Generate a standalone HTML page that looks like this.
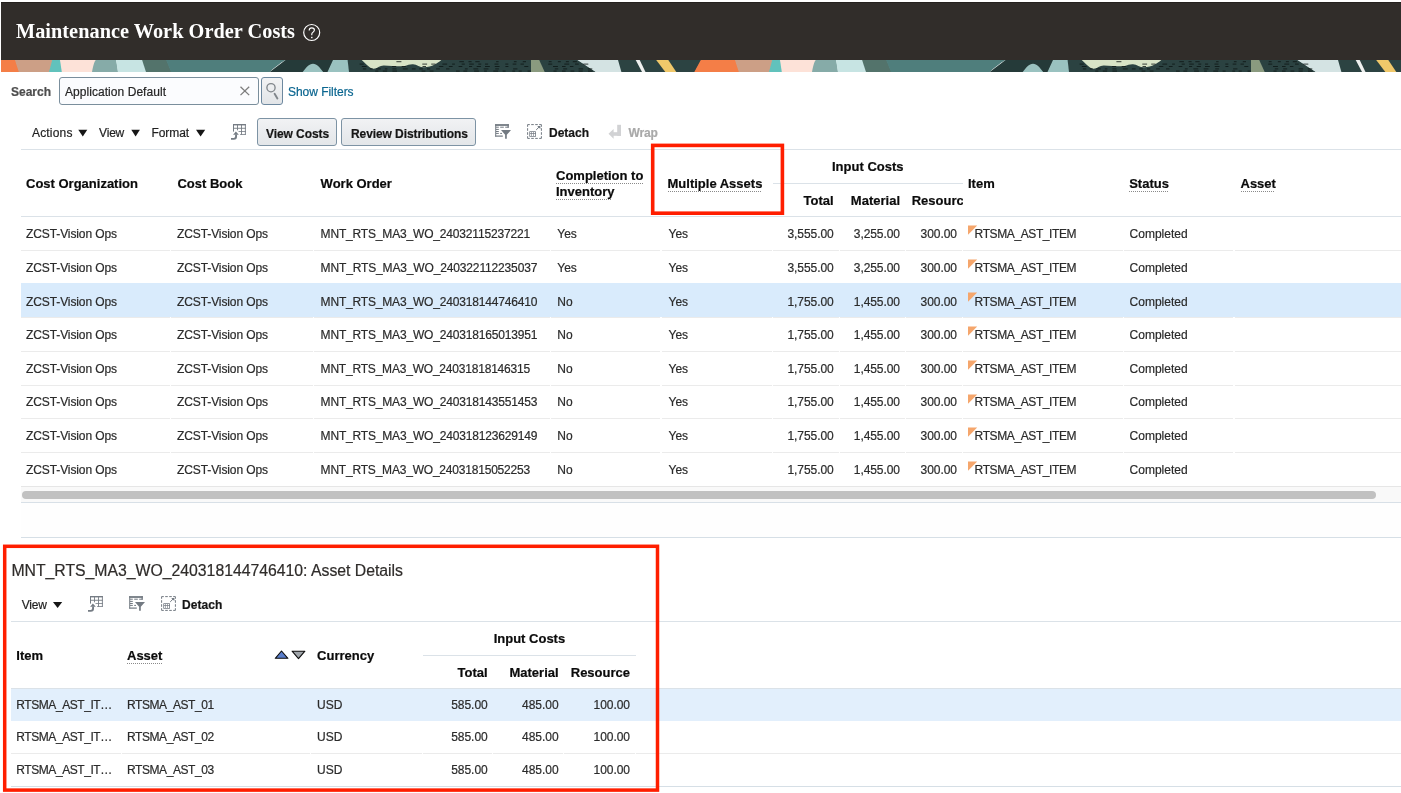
<!DOCTYPE html>
<html><head><meta charset="utf-8"><title>Maintenance Work Order Costs</title>
<style>
html,body{margin:0;padding:0;background:#fff;width:1401px;height:793px;overflow:hidden;position:relative}
span{position:absolute;white-space:nowrap;line-height:1;-webkit-text-stroke-width:0.2px}
#root{position:absolute;left:0;top:0;width:1401px;height:793px;will-change:transform;background:#fff}
</style></head><body><div id="root">
<div style="position:absolute;left:1px;top:2px;width:1400px;height:58px;background:#312d2a"></div>
<div style="position:absolute;left:1px;top:2px;width:1400px;height:1px;background:#25211e"></div>
<span style="left:16.00px;top:21.00px;font-size:20.3px;font-family:'Liberation Serif', serif;font-weight:bold;color:#ffffff;letter-spacing:0.033px;-webkit-text-stroke-width:0;">Maintenance Work Order Costs</span>
<svg style="position:absolute;left:300px;top:21px" width="24" height="24" viewBox="0 0 24 24">
<circle cx="11.7" cy="11.5" r="8" fill="none" stroke="#fff" stroke-width="1.2"/>
<path d="M9.2 9.4 C9.2 7.6 10.4 6.8 11.8 6.8 C13.3 6.8 14.4 7.7 14.4 9.1 C14.4 10.8 12.1 11.2 11.8 12.9 L11.8 14.2" fill="none" stroke="#fff" stroke-width="1.15"/>
<rect x="11.1" y="15.8" width="1.4" height="1.4" fill="#fff"/>
</svg>
<svg style="position:absolute;left:0;top:60px" width="1401" height="12" viewBox="0 0 1401 12"><defs><clipPath id="bc"><rect x="1" y="0" width="1400" height="12"/></clipPath></defs><g clip-path="url(#bc)"><polygon points="-19.2,0.0 15.7,0.0 19.5,12.0 -25.7,12.0" fill="#f47e47"/><polygon points="15.0,0.0 52.9,0.0 49.7,12.0 18.8,12.0" fill="#cc9f86"/><polygon points="52.2,0.0 60.7,0.0 62.5,12.0 49.0,12.0" fill="#61c2bc"/><polygon points="60.0,0.0 96.6,0.0 92.7,12.0 61.8,12.0" fill="#fde2d8"/><path d="M92.0 12 C93.5 4 95.0 0 96.0 0 L116.0 0 C117.0 3 117.5 8 118.0 12 Z" fill="#86aba8"/><polygon points="116.0,0.0 142.8,0.0 146.7,12.0 118.0,12.0" fill="#c7e4e3"/><polygon points="142.1,0.0 166.8,0.0 171.7,12.0 146.0,12.0" fill="#53736b"/><path d="M166.1 0 L285.5 0 C280.0 3 274.0 8 269.7 12 L171.0 12 Z" fill="#4f7e7c"/><polygon points="285.5,0.0 333.7,0.0 328.2,12.0 269.7,12.0" fill="#253a39"/><path d="M302.7 12 C306.0 8 309.0 3.8 313.0 3.8 C317.0 3.8 320.0 8 323.2 12 Z" fill="#9ac2c0"/><polygon points="333.0,0.0 348.3,0.0 349.7,12.0 327.5,12.0" fill="#9ac2c0"/><polygon points="347.6,0.0 578.1,0.0 596.4,12.0 349.0,12.0" fill="#2b4241"/><path d="M361.7 0 C366.0 4 370.0 8.7 373.7 8.7 C377.0 8.7 380.0 5.3 384.0 5.5 C390.0 5.8 398.0 6.5 404.0 6.2 C408.0 5 410.0 4 413.0 4.2 C417.0 4.5 420.0 7.4 424.0 7.3 C432.0 7 438.0 3 441.3 0 Z" fill="#d8e4c7"/><polygon points="531.0,0.0 539.2,0.0 544.7,12.0 531.0,12.0" fill="#8a9a7f"/><polygon points="577.4,0.0 618.7,0.0 622.1,12.0 595.7,12.0" fill="#d4e3e3"/><polygon points="618.0,0.0 701.5,0.0 695.0,12.0 621.4,12.0" fill="#2c4342"/><polygon points="635.7,0.0 639.7,0.0 645.5,12.0 642.0,12.0" fill="#eef0ef"/><polygon points="656.2,0.0 668.3,0.0 676.3,12.0 665.3,12.0" fill="#f0c86a"/><rect x="396.4" y="1.2" width="5.0" height="1" fill="#0c1514" opacity="0.8"/><rect x="459.3" y="1.2" width="4.6" height="1" fill="#0c1514" opacity="0.8"/><rect x="468.5" y="1.2" width="3.1" height="1" fill="#0c1514" opacity="0.8"/><rect x="475.3" y="1.2" width="4.4" height="1" fill="#0c1514" opacity="0.8"/><rect x="496.1" y="1.2" width="2.5" height="1" fill="#0c1514" opacity="0.8"/><rect x="513.9" y="1.2" width="2.7" height="1" fill="#0c1514" opacity="0.8"/><rect x="522.8" y="1.2" width="3.2" height="1" fill="#0c1514" opacity="0.8"/><rect x="548.8" y="1.2" width="2.8" height="1" fill="#0c1514" opacity="0.8"/><rect x="557.9" y="1.2" width="2.9" height="1" fill="#0c1514" opacity="0.8"/><rect x="565.9" y="1.2" width="3.0" height="1" fill="#0c1514" opacity="0.8"/><rect x="572.8" y="1.2" width="4.1" height="1" fill="#0c1514" opacity="0.8"/><rect x="359.6" y="3.6" width="4.1" height="1" fill="#0c1514" opacity="0.8"/><rect x="422.3" y="3.6" width="4.8" height="1" fill="#0c1514" opacity="0.8"/><rect x="431.2" y="3.6" width="4.3" height="1" fill="#0c1514" opacity="0.8"/><rect x="442.4" y="3.6" width="4.7" height="1" fill="#0c1514" opacity="0.8"/><rect x="452.1" y="3.6" width="2.8" height="1" fill="#0c1514" opacity="0.8"/><rect x="461.7" y="3.6" width="3.1" height="1" fill="#0c1514" opacity="0.8"/><rect x="469.2" y="3.6" width="4.6" height="1" fill="#0c1514" opacity="0.8"/><rect x="478.3" y="3.6" width="2.9" height="1" fill="#0c1514" opacity="0.8"/><rect x="485.0" y="3.6" width="3.1" height="1" fill="#0c1514" opacity="0.8"/><rect x="494.5" y="3.6" width="4.0" height="1" fill="#0c1514" opacity="0.8"/><rect x="505.3" y="3.6" width="3.0" height="1" fill="#0c1514" opacity="0.8"/><rect x="512.7" y="3.6" width="3.6" height="1" fill="#0c1514" opacity="0.8"/><rect x="520.5" y="3.6" width="3.4" height="1" fill="#0c1514" opacity="0.8"/><rect x="548.2" y="3.6" width="4.0" height="1" fill="#0c1514" opacity="0.8"/><rect x="564.3" y="3.6" width="4.9" height="1" fill="#0c1514" opacity="0.8"/><rect x="575.0" y="3.6" width="3.7" height="1" fill="#0c1514" opacity="0.8"/><rect x="583.3" y="3.6" width="5.0" height="1" fill="#0c1514" opacity="0.8"/><rect x="361.8" y="6.0" width="4.8" height="1" fill="#0c1514" opacity="0.8"/><rect x="392.1" y="6.0" width="4.1" height="1" fill="#0c1514" opacity="0.8"/><rect x="401.7" y="6.0" width="4.0" height="1" fill="#0c1514" opacity="0.8"/><rect x="422.5" y="6.0" width="3.5" height="1" fill="#0c1514" opacity="0.8"/><rect x="438.9" y="6.0" width="4.4" height="1" fill="#0c1514" opacity="0.8"/><rect x="448.9" y="6.0" width="3.7" height="1" fill="#0c1514" opacity="0.8"/><rect x="458.6" y="6.0" width="3.7" height="1" fill="#0c1514" opacity="0.8"/><rect x="469.0" y="6.0" width="3.1" height="1" fill="#0c1514" opacity="0.8"/><rect x="476.7" y="6.0" width="4.2" height="1" fill="#0c1514" opacity="0.8"/><rect x="485.0" y="6.0" width="4.8" height="1" fill="#0c1514" opacity="0.8"/><rect x="494.8" y="6.0" width="4.7" height="1" fill="#0c1514" opacity="0.8"/><rect x="505.4" y="6.0" width="3.0" height="1" fill="#0c1514" opacity="0.8"/><rect x="524.3" y="6.0" width="4.0" height="1" fill="#0c1514" opacity="0.8"/><rect x="553.0" y="6.0" width="4.9" height="1" fill="#0c1514" opacity="0.8"/><rect x="562.0" y="6.0" width="3.6" height="1" fill="#0c1514" opacity="0.8"/><rect x="569.9" y="6.0" width="3.5" height="1" fill="#0c1514" opacity="0.8"/><rect x="362.9" y="8.4" width="3.3" height="1" fill="#0c1514" opacity="0.8"/><rect x="369.8" y="8.4" width="2.8" height="1" fill="#0c1514" opacity="0.8"/><rect x="376.2" y="8.4" width="4.6" height="1" fill="#0c1514" opacity="0.8"/><rect x="384.8" y="8.4" width="2.6" height="1" fill="#0c1514" opacity="0.8"/><rect x="392.4" y="8.4" width="4.1" height="1" fill="#0c1514" opacity="0.8"/><rect x="402.8" y="8.4" width="4.9" height="1" fill="#0c1514" opacity="0.8"/><rect x="411.9" y="8.4" width="3.7" height="1" fill="#0c1514" opacity="0.8"/><rect x="419.2" y="8.4" width="3.7" height="1" fill="#0c1514" opacity="0.8"/><rect x="427.0" y="8.4" width="3.2" height="1" fill="#0c1514" opacity="0.8"/><rect x="436.1" y="8.4" width="3.8" height="1" fill="#0c1514" opacity="0.8"/><rect x="446.0" y="8.4" width="3.5" height="1" fill="#0c1514" opacity="0.8"/><rect x="464.9" y="8.4" width="2.8" height="1" fill="#0c1514" opacity="0.8"/><rect x="473.4" y="8.4" width="4.8" height="1" fill="#0c1514" opacity="0.8"/><rect x="483.7" y="8.4" width="4.7" height="1" fill="#0c1514" opacity="0.8"/><rect x="495.2" y="8.4" width="3.7" height="1" fill="#0c1514" opacity="0.8"/><rect x="513.1" y="8.4" width="4.3" height="1" fill="#0c1514" opacity="0.8"/><rect x="554.8" y="8.4" width="3.4" height="1" fill="#0c1514" opacity="0.8"/><rect x="563.2" y="8.4" width="3.9" height="1" fill="#0c1514" opacity="0.8"/><rect x="578.6" y="8.4" width="4.5" height="1" fill="#0c1514" opacity="0.8"/><rect x="587.8" y="8.4" width="4.5" height="1" fill="#0c1514" opacity="0.8"/><rect x="375.2" y="10.6" width="3.1" height="1" fill="#0c1514" opacity="0.8"/><rect x="382.8" y="10.6" width="4.3" height="1" fill="#0c1514" opacity="0.8"/><rect x="392.4" y="10.6" width="4.6" height="1" fill="#0c1514" opacity="0.8"/><rect x="421.6" y="10.6" width="3.8" height="1" fill="#0c1514" opacity="0.8"/><rect x="429.7" y="10.6" width="3.8" height="1" fill="#0c1514" opacity="0.8"/><rect x="456.0" y="10.6" width="3.7" height="1" fill="#0c1514" opacity="0.8"/><rect x="463.4" y="10.6" width="3.8" height="1" fill="#0c1514" opacity="0.8"/><rect x="474.1" y="10.6" width="4.8" height="1" fill="#0c1514" opacity="0.8"/><rect x="484.1" y="10.6" width="2.8" height="1" fill="#0c1514" opacity="0.8"/><rect x="493.3" y="10.6" width="4.8" height="1" fill="#0c1514" opacity="0.8"/><rect x="502.6" y="10.6" width="3.0" height="1" fill="#0c1514" opacity="0.8"/><rect x="512.3" y="10.6" width="2.8" height="1" fill="#0c1514" opacity="0.8"/><rect x="518.7" y="10.6" width="3.0" height="1" fill="#0c1514" opacity="0.8"/><rect x="527.6" y="10.6" width="3.3" height="1" fill="#0c1514" opacity="0.8"/><rect x="553.5" y="10.6" width="3.1" height="1" fill="#0c1514" opacity="0.8"/><rect x="562.0" y="10.6" width="3.6" height="1" fill="#0c1514" opacity="0.8"/><rect x="570.5" y="10.6" width="3.8" height="1" fill="#0c1514" opacity="0.8"/><rect x="578.6" y="10.6" width="4.1" height="1" fill="#0c1514" opacity="0.8"/><rect x="588.0" y="10.6" width="4.6" height="1" fill="#0c1514" opacity="0.8"/><polygon points="700.8,0.0 735.7,0.0 739.5,12.0 694.3,12.0" fill="#f47e47"/><polygon points="735.0,0.0 772.9,0.0 769.7,12.0 738.8,12.0" fill="#cc9f86"/><polygon points="772.2,0.0 780.7,0.0 782.5,12.0 769.0,12.0" fill="#61c2bc"/><polygon points="780.0,0.0 816.6,0.0 812.7,12.0 781.8,12.0" fill="#fde2d8"/><path d="M812.0 12 C813.5 4 815.0 0 816.0 0 L836.0 0 C837.0 3 837.5 8 838.0 12 Z" fill="#86aba8"/><polygon points="836.0,0.0 862.8,0.0 866.7,12.0 838.0,12.0" fill="#c7e4e3"/><polygon points="862.1,0.0 886.8,0.0 891.7,12.0 866.0,12.0" fill="#53736b"/><path d="M886.1 0 L1005.5 0 C1000.0 3 994.0 8 989.7 12 L891.0 12 Z" fill="#4f7e7c"/><polygon points="1005.5,0.0 1053.7,0.0 1048.2,12.0 989.7,12.0" fill="#253a39"/><path d="M1022.7 12 C1026.0 8 1029.0 3.8 1033.0 3.8 C1037.0 3.8 1040.0 8 1043.2 12 Z" fill="#9ac2c0"/><polygon points="1053.0,0.0 1068.3,0.0 1069.7,12.0 1047.5,12.0" fill="#9ac2c0"/><polygon points="1067.6,0.0 1298.1,0.0 1316.4,12.0 1069.0,12.0" fill="#2b4241"/><path d="M1081.7 0 C1086.0 4 1090.0 8.7 1093.7 8.7 C1097.0 8.7 1100.0 5.3 1104.0 5.5 C1110.0 5.8 1118.0 6.5 1124.0 6.2 C1128.0 5 1130.0 4 1133.0 4.2 C1137.0 4.5 1140.0 7.4 1144.0 7.3 C1152.0 7 1158.0 3 1161.3 0 Z" fill="#d8e4c7"/><polygon points="1251.0,0.0 1259.2,0.0 1264.7,12.0 1251.0,12.0" fill="#8a9a7f"/><polygon points="1297.4,0.0 1338.7,0.0 1342.1,12.0 1315.7,12.0" fill="#d4e3e3"/><polygon points="1338.0,0.0 1421.5,0.0 1415.0,12.0 1341.4,12.0" fill="#2c4342"/><polygon points="1355.7,0.0 1359.7,0.0 1365.5,12.0 1362.0,12.0" fill="#eef0ef"/><polygon points="1376.2,0.0 1388.3,0.0 1396.3,12.0 1385.3,12.0" fill="#f0c86a"/><rect x="1116.4" y="1.2" width="5.0" height="1" fill="#0c1514" opacity="0.8"/><rect x="1179.3" y="1.2" width="4.6" height="1" fill="#0c1514" opacity="0.8"/><rect x="1188.5" y="1.2" width="3.1" height="1" fill="#0c1514" opacity="0.8"/><rect x="1195.3" y="1.2" width="4.4" height="1" fill="#0c1514" opacity="0.8"/><rect x="1216.1" y="1.2" width="2.5" height="1" fill="#0c1514" opacity="0.8"/><rect x="1233.9" y="1.2" width="2.7" height="1" fill="#0c1514" opacity="0.8"/><rect x="1242.8" y="1.2" width="3.2" height="1" fill="#0c1514" opacity="0.8"/><rect x="1268.8" y="1.2" width="2.8" height="1" fill="#0c1514" opacity="0.8"/><rect x="1277.9" y="1.2" width="2.9" height="1" fill="#0c1514" opacity="0.8"/><rect x="1285.9" y="1.2" width="3.0" height="1" fill="#0c1514" opacity="0.8"/><rect x="1292.8" y="1.2" width="4.1" height="1" fill="#0c1514" opacity="0.8"/><rect x="1079.6" y="3.6" width="4.1" height="1" fill="#0c1514" opacity="0.8"/><rect x="1142.3" y="3.6" width="4.8" height="1" fill="#0c1514" opacity="0.8"/><rect x="1151.2" y="3.6" width="4.3" height="1" fill="#0c1514" opacity="0.8"/><rect x="1162.4" y="3.6" width="4.7" height="1" fill="#0c1514" opacity="0.8"/><rect x="1172.1" y="3.6" width="2.8" height="1" fill="#0c1514" opacity="0.8"/><rect x="1181.7" y="3.6" width="3.1" height="1" fill="#0c1514" opacity="0.8"/><rect x="1189.2" y="3.6" width="4.6" height="1" fill="#0c1514" opacity="0.8"/><rect x="1198.3" y="3.6" width="2.9" height="1" fill="#0c1514" opacity="0.8"/><rect x="1205.0" y="3.6" width="3.1" height="1" fill="#0c1514" opacity="0.8"/><rect x="1214.5" y="3.6" width="4.0" height="1" fill="#0c1514" opacity="0.8"/><rect x="1225.3" y="3.6" width="3.0" height="1" fill="#0c1514" opacity="0.8"/><rect x="1232.7" y="3.6" width="3.6" height="1" fill="#0c1514" opacity="0.8"/><rect x="1240.5" y="3.6" width="3.4" height="1" fill="#0c1514" opacity="0.8"/><rect x="1268.2" y="3.6" width="4.0" height="1" fill="#0c1514" opacity="0.8"/><rect x="1284.3" y="3.6" width="4.9" height="1" fill="#0c1514" opacity="0.8"/><rect x="1295.0" y="3.6" width="3.7" height="1" fill="#0c1514" opacity="0.8"/><rect x="1303.3" y="3.6" width="5.0" height="1" fill="#0c1514" opacity="0.8"/><rect x="1081.8" y="6.0" width="4.8" height="1" fill="#0c1514" opacity="0.8"/><rect x="1112.1" y="6.0" width="4.1" height="1" fill="#0c1514" opacity="0.8"/><rect x="1121.7" y="6.0" width="4.0" height="1" fill="#0c1514" opacity="0.8"/><rect x="1142.5" y="6.0" width="3.5" height="1" fill="#0c1514" opacity="0.8"/><rect x="1158.9" y="6.0" width="4.4" height="1" fill="#0c1514" opacity="0.8"/><rect x="1168.9" y="6.0" width="3.7" height="1" fill="#0c1514" opacity="0.8"/><rect x="1178.6" y="6.0" width="3.7" height="1" fill="#0c1514" opacity="0.8"/><rect x="1189.0" y="6.0" width="3.1" height="1" fill="#0c1514" opacity="0.8"/><rect x="1196.7" y="6.0" width="4.2" height="1" fill="#0c1514" opacity="0.8"/><rect x="1205.0" y="6.0" width="4.8" height="1" fill="#0c1514" opacity="0.8"/><rect x="1214.8" y="6.0" width="4.7" height="1" fill="#0c1514" opacity="0.8"/><rect x="1225.4" y="6.0" width="3.0" height="1" fill="#0c1514" opacity="0.8"/><rect x="1244.3" y="6.0" width="4.0" height="1" fill="#0c1514" opacity="0.8"/><rect x="1273.0" y="6.0" width="4.9" height="1" fill="#0c1514" opacity="0.8"/><rect x="1282.0" y="6.0" width="3.6" height="1" fill="#0c1514" opacity="0.8"/><rect x="1289.9" y="6.0" width="3.5" height="1" fill="#0c1514" opacity="0.8"/><rect x="1082.9" y="8.4" width="3.3" height="1" fill="#0c1514" opacity="0.8"/><rect x="1089.8" y="8.4" width="2.8" height="1" fill="#0c1514" opacity="0.8"/><rect x="1096.2" y="8.4" width="4.6" height="1" fill="#0c1514" opacity="0.8"/><rect x="1104.8" y="8.4" width="2.6" height="1" fill="#0c1514" opacity="0.8"/><rect x="1112.4" y="8.4" width="4.1" height="1" fill="#0c1514" opacity="0.8"/><rect x="1122.8" y="8.4" width="4.9" height="1" fill="#0c1514" opacity="0.8"/><rect x="1131.9" y="8.4" width="3.7" height="1" fill="#0c1514" opacity="0.8"/><rect x="1139.2" y="8.4" width="3.7" height="1" fill="#0c1514" opacity="0.8"/><rect x="1147.0" y="8.4" width="3.2" height="1" fill="#0c1514" opacity="0.8"/><rect x="1156.1" y="8.4" width="3.8" height="1" fill="#0c1514" opacity="0.8"/><rect x="1166.0" y="8.4" width="3.5" height="1" fill="#0c1514" opacity="0.8"/><rect x="1184.9" y="8.4" width="2.8" height="1" fill="#0c1514" opacity="0.8"/><rect x="1193.4" y="8.4" width="4.8" height="1" fill="#0c1514" opacity="0.8"/><rect x="1203.7" y="8.4" width="4.7" height="1" fill="#0c1514" opacity="0.8"/><rect x="1215.2" y="8.4" width="3.7" height="1" fill="#0c1514" opacity="0.8"/><rect x="1233.1" y="8.4" width="4.3" height="1" fill="#0c1514" opacity="0.8"/><rect x="1274.8" y="8.4" width="3.4" height="1" fill="#0c1514" opacity="0.8"/><rect x="1283.2" y="8.4" width="3.9" height="1" fill="#0c1514" opacity="0.8"/><rect x="1298.6" y="8.4" width="4.5" height="1" fill="#0c1514" opacity="0.8"/><rect x="1307.8" y="8.4" width="4.5" height="1" fill="#0c1514" opacity="0.8"/><rect x="1095.2" y="10.6" width="3.1" height="1" fill="#0c1514" opacity="0.8"/><rect x="1102.8" y="10.6" width="4.3" height="1" fill="#0c1514" opacity="0.8"/><rect x="1112.4" y="10.6" width="4.6" height="1" fill="#0c1514" opacity="0.8"/><rect x="1141.6" y="10.6" width="3.8" height="1" fill="#0c1514" opacity="0.8"/><rect x="1149.7" y="10.6" width="3.8" height="1" fill="#0c1514" opacity="0.8"/><rect x="1176.0" y="10.6" width="3.7" height="1" fill="#0c1514" opacity="0.8"/><rect x="1183.4" y="10.6" width="3.8" height="1" fill="#0c1514" opacity="0.8"/><rect x="1194.1" y="10.6" width="4.8" height="1" fill="#0c1514" opacity="0.8"/><rect x="1204.1" y="10.6" width="2.8" height="1" fill="#0c1514" opacity="0.8"/><rect x="1213.3" y="10.6" width="4.8" height="1" fill="#0c1514" opacity="0.8"/><rect x="1222.6" y="10.6" width="3.0" height="1" fill="#0c1514" opacity="0.8"/><rect x="1232.3" y="10.6" width="2.8" height="1" fill="#0c1514" opacity="0.8"/><rect x="1238.7" y="10.6" width="3.0" height="1" fill="#0c1514" opacity="0.8"/><rect x="1247.6" y="10.6" width="3.3" height="1" fill="#0c1514" opacity="0.8"/><rect x="1273.5" y="10.6" width="3.1" height="1" fill="#0c1514" opacity="0.8"/><rect x="1282.0" y="10.6" width="3.6" height="1" fill="#0c1514" opacity="0.8"/><rect x="1290.5" y="10.6" width="3.8" height="1" fill="#0c1514" opacity="0.8"/><rect x="1298.6" y="10.6" width="4.1" height="1" fill="#0c1514" opacity="0.8"/><rect x="1308.0" y="10.6" width="4.6" height="1" fill="#0c1514" opacity="0.8"/><polygon points="-739.2,0.0 -704.3,0.0 -700.5,12.0 -745.7,12.0" fill="#f47e47"/><polygon points="-705.0,0.0 -667.1,0.0 -670.3,12.0 -701.2,12.0" fill="#cc9f86"/><polygon points="-667.8,0.0 -659.3,0.0 -657.5,12.0 -671.0,12.0" fill="#61c2bc"/><polygon points="-660.0,0.0 -623.4,0.0 -627.3,12.0 -658.2,12.0" fill="#fde2d8"/><path d="M-628.0 12 C-626.5 4 -625.0 0 -624.0 0 L-604.0 0 C-603.0 3 -602.5 8 -602.0 12 Z" fill="#86aba8"/><polygon points="-604.0,0.0 -577.2,0.0 -573.3,12.0 -602.0,12.0" fill="#c7e4e3"/><polygon points="-577.9,0.0 -553.2,0.0 -548.3,12.0 -574.0,12.0" fill="#53736b"/><path d="M-553.9 0 L-434.5 0 C-440.0 3 -446.0 8 -450.3 12 L-549.0 12 Z" fill="#4f7e7c"/><polygon points="-434.5,0.0 -386.3,0.0 -391.8,12.0 -450.3,12.0" fill="#253a39"/><path d="M-417.3 12 C-414.0 8 -411.0 3.8 -407.0 3.8 C-403.0 3.8 -400.0 8 -396.8 12 Z" fill="#9ac2c0"/><polygon points="-387.0,0.0 -371.7,0.0 -370.3,12.0 -392.5,12.0" fill="#9ac2c0"/><polygon points="-372.4,0.0 -141.9,0.0 -123.6,12.0 -371.0,12.0" fill="#2b4241"/><path d="M-358.3 0 C-354.0 4 -350.0 8.7 -346.3 8.7 C-343.0 8.7 -340.0 5.3 -336.0 5.5 C-330.0 5.8 -322.0 6.5 -316.0 6.2 C-312.0 5 -310.0 4 -307.0 4.2 C-303.0 4.5 -300.0 7.4 -296.0 7.3 C-288.0 7 -282.0 3 -278.7 0 Z" fill="#d8e4c7"/><polygon points="-189.0,0.0 -180.8,0.0 -175.3,12.0 -189.0,12.0" fill="#8a9a7f"/><polygon points="-142.6,0.0 -101.3,0.0 -97.9,12.0 -124.3,12.0" fill="#d4e3e3"/><polygon points="-102.0,0.0 -18.5,0.0 -25.0,12.0 -98.6,12.0" fill="#2c4342"/><polygon points="-84.3,0.0 -80.3,0.0 -74.5,12.0 -78.0,12.0" fill="#eef0ef"/><polygon points="-63.8,0.0 -51.7,0.0 -43.7,12.0 -54.7,12.0" fill="#f0c86a"/><rect x="-323.6" y="1.2" width="5.0" height="1" fill="#0c1514" opacity="0.8"/><rect x="-260.7" y="1.2" width="4.6" height="1" fill="#0c1514" opacity="0.8"/><rect x="-251.5" y="1.2" width="3.1" height="1" fill="#0c1514" opacity="0.8"/><rect x="-244.7" y="1.2" width="4.4" height="1" fill="#0c1514" opacity="0.8"/><rect x="-223.9" y="1.2" width="2.5" height="1" fill="#0c1514" opacity="0.8"/><rect x="-206.1" y="1.2" width="2.7" height="1" fill="#0c1514" opacity="0.8"/><rect x="-197.2" y="1.2" width="3.2" height="1" fill="#0c1514" opacity="0.8"/><rect x="-171.2" y="1.2" width="2.8" height="1" fill="#0c1514" opacity="0.8"/><rect x="-162.1" y="1.2" width="2.9" height="1" fill="#0c1514" opacity="0.8"/><rect x="-154.1" y="1.2" width="3.0" height="1" fill="#0c1514" opacity="0.8"/><rect x="-147.2" y="1.2" width="4.1" height="1" fill="#0c1514" opacity="0.8"/><rect x="-360.4" y="3.6" width="4.1" height="1" fill="#0c1514" opacity="0.8"/><rect x="-297.7" y="3.6" width="4.8" height="1" fill="#0c1514" opacity="0.8"/><rect x="-288.8" y="3.6" width="4.3" height="1" fill="#0c1514" opacity="0.8"/><rect x="-277.6" y="3.6" width="4.7" height="1" fill="#0c1514" opacity="0.8"/><rect x="-267.9" y="3.6" width="2.8" height="1" fill="#0c1514" opacity="0.8"/><rect x="-258.3" y="3.6" width="3.1" height="1" fill="#0c1514" opacity="0.8"/><rect x="-250.8" y="3.6" width="4.6" height="1" fill="#0c1514" opacity="0.8"/><rect x="-241.7" y="3.6" width="2.9" height="1" fill="#0c1514" opacity="0.8"/><rect x="-235.0" y="3.6" width="3.1" height="1" fill="#0c1514" opacity="0.8"/><rect x="-225.5" y="3.6" width="4.0" height="1" fill="#0c1514" opacity="0.8"/><rect x="-214.7" y="3.6" width="3.0" height="1" fill="#0c1514" opacity="0.8"/><rect x="-207.3" y="3.6" width="3.6" height="1" fill="#0c1514" opacity="0.8"/><rect x="-199.5" y="3.6" width="3.4" height="1" fill="#0c1514" opacity="0.8"/><rect x="-171.8" y="3.6" width="4.0" height="1" fill="#0c1514" opacity="0.8"/><rect x="-155.7" y="3.6" width="4.9" height="1" fill="#0c1514" opacity="0.8"/><rect x="-145.0" y="3.6" width="3.7" height="1" fill="#0c1514" opacity="0.8"/><rect x="-136.7" y="3.6" width="5.0" height="1" fill="#0c1514" opacity="0.8"/><rect x="-358.2" y="6.0" width="4.8" height="1" fill="#0c1514" opacity="0.8"/><rect x="-327.9" y="6.0" width="4.1" height="1" fill="#0c1514" opacity="0.8"/><rect x="-318.3" y="6.0" width="4.0" height="1" fill="#0c1514" opacity="0.8"/><rect x="-297.5" y="6.0" width="3.5" height="1" fill="#0c1514" opacity="0.8"/><rect x="-281.1" y="6.0" width="4.4" height="1" fill="#0c1514" opacity="0.8"/><rect x="-271.1" y="6.0" width="3.7" height="1" fill="#0c1514" opacity="0.8"/><rect x="-261.4" y="6.0" width="3.7" height="1" fill="#0c1514" opacity="0.8"/><rect x="-251.0" y="6.0" width="3.1" height="1" fill="#0c1514" opacity="0.8"/><rect x="-243.3" y="6.0" width="4.2" height="1" fill="#0c1514" opacity="0.8"/><rect x="-235.0" y="6.0" width="4.8" height="1" fill="#0c1514" opacity="0.8"/><rect x="-225.2" y="6.0" width="4.7" height="1" fill="#0c1514" opacity="0.8"/><rect x="-214.6" y="6.0" width="3.0" height="1" fill="#0c1514" opacity="0.8"/><rect x="-195.7" y="6.0" width="4.0" height="1" fill="#0c1514" opacity="0.8"/><rect x="-167.0" y="6.0" width="4.9" height="1" fill="#0c1514" opacity="0.8"/><rect x="-158.0" y="6.0" width="3.6" height="1" fill="#0c1514" opacity="0.8"/><rect x="-150.1" y="6.0" width="3.5" height="1" fill="#0c1514" opacity="0.8"/><rect x="-357.1" y="8.4" width="3.3" height="1" fill="#0c1514" opacity="0.8"/><rect x="-350.2" y="8.4" width="2.8" height="1" fill="#0c1514" opacity="0.8"/><rect x="-343.8" y="8.4" width="4.6" height="1" fill="#0c1514" opacity="0.8"/><rect x="-335.2" y="8.4" width="2.6" height="1" fill="#0c1514" opacity="0.8"/><rect x="-327.6" y="8.4" width="4.1" height="1" fill="#0c1514" opacity="0.8"/><rect x="-317.2" y="8.4" width="4.9" height="1" fill="#0c1514" opacity="0.8"/><rect x="-308.1" y="8.4" width="3.7" height="1" fill="#0c1514" opacity="0.8"/><rect x="-300.8" y="8.4" width="3.7" height="1" fill="#0c1514" opacity="0.8"/><rect x="-293.0" y="8.4" width="3.2" height="1" fill="#0c1514" opacity="0.8"/><rect x="-283.9" y="8.4" width="3.8" height="1" fill="#0c1514" opacity="0.8"/><rect x="-274.0" y="8.4" width="3.5" height="1" fill="#0c1514" opacity="0.8"/><rect x="-255.1" y="8.4" width="2.8" height="1" fill="#0c1514" opacity="0.8"/><rect x="-246.6" y="8.4" width="4.8" height="1" fill="#0c1514" opacity="0.8"/><rect x="-236.3" y="8.4" width="4.7" height="1" fill="#0c1514" opacity="0.8"/><rect x="-224.8" y="8.4" width="3.7" height="1" fill="#0c1514" opacity="0.8"/><rect x="-206.9" y="8.4" width="4.3" height="1" fill="#0c1514" opacity="0.8"/><rect x="-165.2" y="8.4" width="3.4" height="1" fill="#0c1514" opacity="0.8"/><rect x="-156.8" y="8.4" width="3.9" height="1" fill="#0c1514" opacity="0.8"/><rect x="-141.4" y="8.4" width="4.5" height="1" fill="#0c1514" opacity="0.8"/><rect x="-132.2" y="8.4" width="4.5" height="1" fill="#0c1514" opacity="0.8"/><rect x="-344.8" y="10.6" width="3.1" height="1" fill="#0c1514" opacity="0.8"/><rect x="-337.2" y="10.6" width="4.3" height="1" fill="#0c1514" opacity="0.8"/><rect x="-327.6" y="10.6" width="4.6" height="1" fill="#0c1514" opacity="0.8"/><rect x="-298.4" y="10.6" width="3.8" height="1" fill="#0c1514" opacity="0.8"/><rect x="-290.3" y="10.6" width="3.8" height="1" fill="#0c1514" opacity="0.8"/><rect x="-264.0" y="10.6" width="3.7" height="1" fill="#0c1514" opacity="0.8"/><rect x="-256.6" y="10.6" width="3.8" height="1" fill="#0c1514" opacity="0.8"/><rect x="-245.9" y="10.6" width="4.8" height="1" fill="#0c1514" opacity="0.8"/><rect x="-235.9" y="10.6" width="2.8" height="1" fill="#0c1514" opacity="0.8"/><rect x="-226.7" y="10.6" width="4.8" height="1" fill="#0c1514" opacity="0.8"/><rect x="-217.4" y="10.6" width="3.0" height="1" fill="#0c1514" opacity="0.8"/><rect x="-207.7" y="10.6" width="2.8" height="1" fill="#0c1514" opacity="0.8"/><rect x="-201.3" y="10.6" width="3.0" height="1" fill="#0c1514" opacity="0.8"/><rect x="-192.4" y="10.6" width="3.3" height="1" fill="#0c1514" opacity="0.8"/><rect x="-166.5" y="10.6" width="3.1" height="1" fill="#0c1514" opacity="0.8"/><rect x="-158.0" y="10.6" width="3.6" height="1" fill="#0c1514" opacity="0.8"/><rect x="-149.5" y="10.6" width="3.8" height="1" fill="#0c1514" opacity="0.8"/><rect x="-141.4" y="10.6" width="4.1" height="1" fill="#0c1514" opacity="0.8"/><rect x="-132.0" y="10.6" width="4.6" height="1" fill="#0c1514" opacity="0.8"/></g></svg>
<span style="left:11.00px;top:86.00px;font-size:12px;font-family:'Liberation Sans', sans-serif;font-weight:bold;color:#4d4d4d;letter-spacing:-0.006px;">Search</span>
<div style="position:absolute;left:59px;top:77px;width:200px;height:28px;box-sizing:border-box;border:1px solid #7a8e9c;border-radius:3px;background:#fbfcfe"></div>
<span style="left:65.00px;top:86.00px;font-size:12px;font-family:'Liberation Sans', sans-serif;color:#262626;letter-spacing:0.052px;">Application Default</span>
<svg style="position:absolute;left:238px;top:84px" width="14" height="14" viewBox="0 0 14 14"><path d="M2.5 2.8 L11.2 11.1 M11.2 2.8 L2.5 11.1" stroke="#7d7d7d" stroke-width="1.3" fill="none"/></svg>
<div style="position:absolute;left:261px;top:77px;width:22px;height:28px;box-sizing:border-box;border:1px solid #6d889f;border-radius:3px;background:linear-gradient(#f2f3f4,#e2e5e8)"></div>
<svg style="position:absolute;left:262px;top:80px" width="20" height="22" viewBox="0 0 20 22"><circle cx="9" cy="7.7" r="4.1" fill="none" stroke="#80868b" stroke-width="1.35"/><path d="M12.6 13.8 L15.4 18.5" stroke="#80868b" stroke-width="1.9" stroke-linecap="round"/></svg>
<span style="left:288.00px;top:86.00px;font-size:12px;font-family:'Liberation Sans', sans-serif;color:#0b6690;letter-spacing:-0.039px;">Show Filters</span>
<span style="left:32.00px;top:127.00px;font-size:12px;font-family:'Liberation Sans', sans-serif;color:#1f1f1f;letter-spacing:0.173px;">Actions</span>
<svg style="position:absolute;left:77px;top:128px" width="12" height="9"><polygon points="1.30,1.80 10.30,1.80 5.80,8.60" fill="#161616"/></svg>
<span style="left:99.10px;top:127.00px;font-size:12px;font-family:'Liberation Sans', sans-serif;color:#1f1f1f;letter-spacing:-0.199px;">View</span>
<svg style="position:absolute;left:130px;top:128px" width="11" height="9"><polygon points="1.30,1.80 9.90,1.80 5.60,8.60" fill="#161616"/></svg>
<span style="left:151.40px;top:127.00px;font-size:12px;font-family:'Liberation Sans', sans-serif;color:#1f1f1f;letter-spacing:-0.063px;">Format</span>
<svg style="position:absolute;left:195px;top:128px" width="12" height="9"><polygon points="1.00,1.80 10.20,1.80 5.60,8.60" fill="#161616"/></svg>
<svg style="position:absolute;left:229px;top:122px" width="18" height="19" viewBox="0 0 18 19">
<g fill="#757c84">
<rect x="4" y="2" width="12.8" height="1.4"/>
<rect x="4" y="2" width="1" height="7.6"/>
<rect x="8.1" y="2" width="0.9" height="6.3"/>
<rect x="12.1" y="2" width="0.9" height="10.8"/>
<rect x="15.9" y="2" width="0.9" height="10.8"/>
<rect x="4" y="5.8" width="12.8" height="0.9"/>
<rect x="9.5" y="9.1" width="7.3" height="0.8"/>
<rect x="11.1" y="12.1" width="5.7" height="0.8"/>
<polygon points="6.9,9.4 4.1,12.7 9.8,12.7"/>
</g>
<path d="M7.07 12.5 V14.6 Q7.07 16.9 4.8 16.9 H2" fill="none" stroke="#757c84" stroke-width="1.9"/>
</svg>
<div style="position:absolute;left:257px;top:118px;width:80px;height:28px;box-sizing:border-box;border:1px solid #7d93a4;border-radius:3px;background:linear-gradient(#f1f2f4,#e3e6e9)"></div>
<span style="left:266.00px;top:128.00px;font-size:12px;font-family:'Liberation Sans', sans-serif;font-weight:bold;color:#161616;letter-spacing:-0.068px;">View Costs</span>
<div style="position:absolute;left:341px;top:118px;width:135px;height:28px;box-sizing:border-box;border:1px solid #7d93a4;border-radius:3px;background:linear-gradient(#f1f2f4,#e3e6e9)"></div>
<span style="left:351.00px;top:128.00px;font-size:12px;font-family:'Liberation Sans', sans-serif;font-weight:bold;color:#161616;letter-spacing:-0.089px;">Review Distributions</span>
<svg style="position:absolute;left:495px;top:124px" width="18" height="18" viewBox="0 0 18 18">
<g fill="#737a82">
<rect x="0.2" y="0.1" width="13.6" height="1.8"/>
<rect x="0.2" y="0.1" width="1" height="12.5"/>
<rect x="12.5" y="0.1" width="1.3" height="3.5"/>
<rect x="1" y="2.7" width="2.8" height="1"/>
<rect x="5.2" y="2.7" width="3.6" height="1"/>
<rect x="10.2" y="2.7" width="3.6" height="1"/>
<rect x="1" y="4.9" width="2.8" height="1"/>
<rect x="1" y="7" width="2.8" height="1"/>
<rect x="1" y="8.9" width="2.8" height="1"/>
<rect x="5.2" y="8.9" width="1.8" height="1"/>
<rect x="0.2" y="11.5" width="7.6" height="1.2"/>
<polygon points="6,6 16,6 11.8,10.8 11.8,14.8 10.1,14.8 10.1,10.8"/>
</g></svg>
<svg style="position:absolute;left:527px;top:124px" width="18" height="18" viewBox="0 0 18 18">
<g fill="none" stroke="#737a82" stroke-width="1">
<path d="M0.6 2.8 V0.6 H2.8 M4.2 0.6 H6.8 M8.2 0.6 H10.8 M12.2 0.6 H14.4 V2.8 M14.4 4.2 V6.8 M14.4 8.2 V10.8 M14.4 12.2 V14.4 H12.2 M10.8 14.4 H8.2 M6.8 14.4 H4.2 M2.8 14.4 H0.6 V12.2 M0.6 10.8 V8.2 M0.6 6.8 V4.2"/>
<path d="M9.2 5.9 L12 3.1" stroke-width="1"/>
</g>
<polygon points="10.2,1.9 13.4,1.9 13.4,5.1" fill="#737a82"/>
<rect x="2.3" y="7.2" width="6.7" height="5.6" rx="0.6" fill="#737a82"/>
<g fill="#fff"><rect x="3.1" y="8" width="1.3" height="1.2"/><rect x="5" y="8" width="1.3" height="1.2"/><rect x="6.9" y="8" width="1.3" height="1.2"/>
<rect x="3.1" y="9.9" width="1.3" height="2.1"/><rect x="5" y="9.9" width="1.3" height="2.1"/><rect x="6.9" y="9.9" width="1.3" height="2.1"/></g>
</svg>
<span style="left:549.00px;top:127.00px;font-size:12px;font-family:'Liberation Sans', sans-serif;font-weight:bold;color:#161616;letter-spacing:-0.003px;">Detach</span>
<svg style="position:absolute;left:606px;top:123px" width="18" height="18" viewBox="0 0 18 18"><g fill="#d1d2d4"><rect x="11.2" y="1.8" width="3.8" height="11"/><rect x="7" y="9.2" width="8" height="3.6"/><polygon points="2.5,10.8 7.6,6 7.6,15.8"/></g></svg>
<span style="left:628.60px;top:127.00px;font-size:12px;font-family:'Liberation Sans', sans-serif;font-weight:bold;color:#a9a9a9;letter-spacing:-0.166px;">Wrap</span>
<div style="position:absolute;left:21.0px;top:149px;width:1380.0px;height:1px;background:#dbe2e8"></div>
<span style="left:26.00px;top:177.00px;font-size:13px;font-family:'Liberation Sans', sans-serif;font-weight:bold;color:#0b0b0b;">Cost Organization</span>
<span style="left:177.40px;top:177.00px;font-size:13px;font-family:'Liberation Sans', sans-serif;font-weight:bold;color:#0b0b0b;">Cost Book</span>
<span style="left:320.60px;top:177.00px;font-size:13px;font-family:'Liberation Sans', sans-serif;font-weight:bold;color:#0b0b0b;">Work Order</span>
<span style="left:556.00px;top:169.00px;font-size:13px;font-family:'Liberation Sans', sans-serif;font-weight:bold;color:#0b0b0b;">Completion to</span>
<div style="position:absolute;left:556.0px;top:183px;width:87.5px;height:1px;background:repeating-linear-gradient(90deg,#8a8a8a 0 1px,transparent 1px 2px)"></div>
<span style="left:556.00px;top:185.00px;font-size:13px;font-family:'Liberation Sans', sans-serif;font-weight:bold;color:#0b0b0b;">Inventory</span>
<div style="position:absolute;left:556.0px;top:199px;width:56.0px;height:1px;background:repeating-linear-gradient(90deg,#8a8a8a 0 1px,transparent 1px 2px)"></div>
<span style="left:667.50px;top:177.00px;font-size:13px;font-family:'Liberation Sans', sans-serif;font-weight:bold;color:#0b0b0b;">Multiple Assets</span>
<div style="position:absolute;left:667.5px;top:191px;width:94.2px;height:1px;background:repeating-linear-gradient(90deg,#8a8a8a 0 1px,transparent 1px 2px)"></div>
<span style="left:832.00px;top:160.00px;font-size:13px;font-family:'Liberation Sans', sans-serif;font-weight:bold;color:#0b0b0b;">Input Costs</span>
<div style="position:absolute;left:773.0px;top:183px;width:189.5px;height:1px;background:#dbe2e8"></div>
<span style="left:803.61px;top:194.00px;font-size:13px;font-family:'Liberation Sans', sans-serif;font-weight:bold;color:#0b0b0b;">Total</span>
<span style="left:850.86px;top:194.00px;font-size:13px;font-family:'Liberation Sans', sans-serif;font-weight:bold;color:#0b0b0b;">Material</span>
<div style="position:absolute;left:905.5px;top:180px;width:57px;height:40px;overflow:hidden">
<span style="left:6.20px;top:14.00px;font-size:13px;font-family:'Liberation Sans', sans-serif;font-weight:bold;color:#0b0b0b;">Resourc</span>
</div>
<span style="left:968.00px;top:177.00px;font-size:13px;font-family:'Liberation Sans', sans-serif;font-weight:bold;color:#0b0b0b;">Item</span>
<span style="left:1129.20px;top:177.00px;font-size:13px;font-family:'Liberation Sans', sans-serif;font-weight:bold;color:#0b0b0b;">Status</span>
<div style="position:absolute;left:1129.2px;top:191px;width:39.5px;height:1px;background:repeating-linear-gradient(90deg,#8a8a8a 0 1px,transparent 1px 2px)"></div>
<span style="left:1240.50px;top:177.00px;font-size:13px;font-family:'Liberation Sans', sans-serif;font-weight:bold;color:#0b0b0b;">Asset</span>
<div style="position:absolute;left:1240.5px;top:191px;width:34.5px;height:1px;background:repeating-linear-gradient(90deg,#8a8a8a 0 1px,transparent 1px 2px)"></div>
<div style="position:absolute;left:21.0px;top:216px;width:1380.0px;height:1px;background:#dbe2e8"></div>
<span style="left:26.00px;top:228.00px;font-size:12px;font-family:'Liberation Sans', sans-serif;color:#2b2b2b;letter-spacing:-0.106px;">ZCST-Vision Ops</span>
<span style="left:177.00px;top:228.00px;font-size:12px;font-family:'Liberation Sans', sans-serif;color:#2b2b2b;letter-spacing:-0.106px;">ZCST-Vision Ops</span>
<span style="left:320.60px;top:228.00px;font-size:12px;font-family:'Liberation Sans', sans-serif;color:#2b2b2b;letter-spacing:-0.170px;">MNT_RTS_MA3_WO_24032115237221</span>
<span style="left:557.30px;top:228.00px;font-size:12px;font-family:'Liberation Sans', sans-serif;color:#2b2b2b;">Yes</span>
<span style="left:668.50px;top:228.00px;font-size:12px;font-family:'Liberation Sans', sans-serif;color:#2b2b2b;">Yes</span>
<span style="left:787.50px;top:228.00px;font-size:12px;font-family:'Liberation Sans', sans-serif;color:#2b2b2b;letter-spacing:-0.074px;">3,555.00</span>
<span style="left:853.80px;top:228.00px;font-size:12px;font-family:'Liberation Sans', sans-serif;color:#2b2b2b;letter-spacing:-0.074px;">3,255.00</span>
<span style="left:920.50px;top:228.00px;font-size:12px;font-family:'Liberation Sans', sans-serif;color:#2b2b2b;letter-spacing:-0.041px;">300.00</span>
<svg style="position:absolute;left:967px;top:225px" width="12" height="12"><polygon points="1,0.6 10.2,0.6 1,9.8" fill="#f5a66c"/></svg>
<span style="left:974.60px;top:228.00px;font-size:12px;font-family:'Liberation Sans', sans-serif;color:#2b2b2b;letter-spacing:-0.395px;">RTSMA_AST_ITEM</span>
<span style="left:1129.60px;top:228.00px;font-size:12px;font-family:'Liberation Sans', sans-serif;color:#2b2b2b;">Completed</span>
<div style="position:absolute;left:21.0px;top:250px;width:149.0px;height:1px;background:#ebebeb"></div>
<div style="position:absolute;left:171.0px;top:250px;width:142.0px;height:1px;background:#ebebeb"></div>
<div style="position:absolute;left:314.0px;top:250px;width:235.6px;height:1px;background:#ebebeb"></div>
<div style="position:absolute;left:550.6px;top:250px;width:109.9px;height:1px;background:#ebebeb"></div>
<div style="position:absolute;left:661.5px;top:250px;width:110.0px;height:1px;background:#ebebeb"></div>
<div style="position:absolute;left:772.5px;top:250px;width:66.5px;height:1px;background:#ebebeb"></div>
<div style="position:absolute;left:840.0px;top:250px;width:64.5px;height:1px;background:#ebebeb"></div>
<div style="position:absolute;left:905.5px;top:250px;width:56.0px;height:1px;background:#ebebeb"></div>
<div style="position:absolute;left:962.5px;top:250px;width:160.2px;height:1px;background:#ebebeb"></div>
<div style="position:absolute;left:1123.7px;top:250px;width:109.8px;height:1px;background:#ebebeb"></div>
<div style="position:absolute;left:1234.5px;top:250px;width:166.5px;height:1px;background:#ebebeb"></div>
<span style="left:26.00px;top:262.00px;font-size:12px;font-family:'Liberation Sans', sans-serif;color:#2b2b2b;letter-spacing:-0.106px;">ZCST-Vision Ops</span>
<span style="left:177.00px;top:262.00px;font-size:12px;font-family:'Liberation Sans', sans-serif;color:#2b2b2b;letter-spacing:-0.106px;">ZCST-Vision Ops</span>
<span style="left:320.60px;top:262.00px;font-size:12px;font-family:'Liberation Sans', sans-serif;color:#2b2b2b;letter-spacing:-0.146px;">MNT_RTS_MA3_WO_240322112235037</span>
<span style="left:557.30px;top:262.00px;font-size:12px;font-family:'Liberation Sans', sans-serif;color:#2b2b2b;">Yes</span>
<span style="left:668.50px;top:262.00px;font-size:12px;font-family:'Liberation Sans', sans-serif;color:#2b2b2b;">Yes</span>
<span style="left:787.50px;top:262.00px;font-size:12px;font-family:'Liberation Sans', sans-serif;color:#2b2b2b;letter-spacing:-0.074px;">3,555.00</span>
<span style="left:853.80px;top:262.00px;font-size:12px;font-family:'Liberation Sans', sans-serif;color:#2b2b2b;letter-spacing:-0.074px;">3,255.00</span>
<span style="left:920.50px;top:262.00px;font-size:12px;font-family:'Liberation Sans', sans-serif;color:#2b2b2b;letter-spacing:-0.041px;">300.00</span>
<svg style="position:absolute;left:967px;top:259px" width="12" height="12"><polygon points="1,0.6 10.2,0.6 1,9.8" fill="#f5a66c"/></svg>
<span style="left:974.60px;top:262.00px;font-size:12px;font-family:'Liberation Sans', sans-serif;color:#2b2b2b;letter-spacing:-0.395px;">RTSMA_AST_ITEM</span>
<span style="left:1129.60px;top:262.00px;font-size:12px;font-family:'Liberation Sans', sans-serif;color:#2b2b2b;">Completed</span>
<div style="position:absolute;left:21.0px;top:283px;width:149.0px;height:1px;background:#ebebeb"></div>
<div style="position:absolute;left:171.0px;top:283px;width:142.0px;height:1px;background:#ebebeb"></div>
<div style="position:absolute;left:314.0px;top:283px;width:235.6px;height:1px;background:#ebebeb"></div>
<div style="position:absolute;left:550.6px;top:283px;width:109.9px;height:1px;background:#ebebeb"></div>
<div style="position:absolute;left:661.5px;top:283px;width:110.0px;height:1px;background:#ebebeb"></div>
<div style="position:absolute;left:772.5px;top:283px;width:66.5px;height:1px;background:#ebebeb"></div>
<div style="position:absolute;left:840.0px;top:283px;width:64.5px;height:1px;background:#ebebeb"></div>
<div style="position:absolute;left:905.5px;top:283px;width:56.0px;height:1px;background:#ebebeb"></div>
<div style="position:absolute;left:962.5px;top:283px;width:160.2px;height:1px;background:#ebebeb"></div>
<div style="position:absolute;left:1123.7px;top:283px;width:109.8px;height:1px;background:#ebebeb"></div>
<div style="position:absolute;left:1234.5px;top:283px;width:166.5px;height:1px;background:#ebebeb"></div>
<div style="position:absolute;left:21px;top:283px;width:1380px;height:34px;background:#d9ebfc"></div>
<span style="left:26.00px;top:296.00px;font-size:12px;font-family:'Liberation Sans', sans-serif;color:#2b2b2b;letter-spacing:-0.106px;">ZCST-Vision Ops</span>
<span style="left:177.00px;top:296.00px;font-size:12px;font-family:'Liberation Sans', sans-serif;color:#2b2b2b;letter-spacing:-0.106px;">ZCST-Vision Ops</span>
<span style="left:320.60px;top:296.00px;font-size:12px;font-family:'Liberation Sans', sans-serif;color:#2b2b2b;letter-spacing:-0.177px;">MNT_RTS_MA3_WO_240318144746410</span>
<span style="left:557.30px;top:296.00px;font-size:12px;font-family:'Liberation Sans', sans-serif;color:#2b2b2b;">No</span>
<span style="left:668.50px;top:296.00px;font-size:12px;font-family:'Liberation Sans', sans-serif;color:#2b2b2b;">Yes</span>
<span style="left:787.50px;top:296.00px;font-size:12px;font-family:'Liberation Sans', sans-serif;color:#2b2b2b;letter-spacing:-0.074px;">1,755.00</span>
<span style="left:853.80px;top:296.00px;font-size:12px;font-family:'Liberation Sans', sans-serif;color:#2b2b2b;letter-spacing:-0.074px;">1,455.00</span>
<span style="left:920.50px;top:296.00px;font-size:12px;font-family:'Liberation Sans', sans-serif;color:#2b2b2b;letter-spacing:-0.041px;">300.00</span>
<svg style="position:absolute;left:967px;top:292px" width="12" height="12"><polygon points="1,0.6 10.2,0.6 1,9.8" fill="#f5a66c"/></svg>
<span style="left:974.60px;top:296.00px;font-size:12px;font-family:'Liberation Sans', sans-serif;color:#2b2b2b;letter-spacing:-0.395px;">RTSMA_AST_ITEM</span>
<span style="left:1129.60px;top:296.00px;font-size:12px;font-family:'Liberation Sans', sans-serif;color:#2b2b2b;">Completed</span>
<div style="position:absolute;left:21.0px;top:317px;width:149.0px;height:1px;background:#ebebeb"></div>
<div style="position:absolute;left:171.0px;top:317px;width:142.0px;height:1px;background:#ebebeb"></div>
<div style="position:absolute;left:314.0px;top:317px;width:235.6px;height:1px;background:#ebebeb"></div>
<div style="position:absolute;left:550.6px;top:317px;width:109.9px;height:1px;background:#ebebeb"></div>
<div style="position:absolute;left:661.5px;top:317px;width:110.0px;height:1px;background:#ebebeb"></div>
<div style="position:absolute;left:772.5px;top:317px;width:66.5px;height:1px;background:#ebebeb"></div>
<div style="position:absolute;left:840.0px;top:317px;width:64.5px;height:1px;background:#ebebeb"></div>
<div style="position:absolute;left:905.5px;top:317px;width:56.0px;height:1px;background:#ebebeb"></div>
<div style="position:absolute;left:962.5px;top:317px;width:160.2px;height:1px;background:#ebebeb"></div>
<div style="position:absolute;left:1123.7px;top:317px;width:109.8px;height:1px;background:#ebebeb"></div>
<div style="position:absolute;left:1234.5px;top:317px;width:166.5px;height:1px;background:#ebebeb"></div>
<span style="left:26.00px;top:329.00px;font-size:12px;font-family:'Liberation Sans', sans-serif;color:#2b2b2b;letter-spacing:-0.106px;">ZCST-Vision Ops</span>
<span style="left:177.00px;top:329.00px;font-size:12px;font-family:'Liberation Sans', sans-serif;color:#2b2b2b;letter-spacing:-0.106px;">ZCST-Vision Ops</span>
<span style="left:320.60px;top:329.00px;font-size:12px;font-family:'Liberation Sans', sans-serif;color:#2b2b2b;letter-spacing:-0.177px;">MNT_RTS_MA3_WO_240318165013951</span>
<span style="left:557.30px;top:329.00px;font-size:12px;font-family:'Liberation Sans', sans-serif;color:#2b2b2b;">No</span>
<span style="left:668.50px;top:329.00px;font-size:12px;font-family:'Liberation Sans', sans-serif;color:#2b2b2b;">Yes</span>
<span style="left:787.50px;top:329.00px;font-size:12px;font-family:'Liberation Sans', sans-serif;color:#2b2b2b;letter-spacing:-0.074px;">1,755.00</span>
<span style="left:853.80px;top:329.00px;font-size:12px;font-family:'Liberation Sans', sans-serif;color:#2b2b2b;letter-spacing:-0.074px;">1,455.00</span>
<span style="left:920.50px;top:329.00px;font-size:12px;font-family:'Liberation Sans', sans-serif;color:#2b2b2b;letter-spacing:-0.041px;">300.00</span>
<svg style="position:absolute;left:967px;top:326px" width="12" height="12"><polygon points="1,0.6 10.2,0.6 1,9.8" fill="#f5a66c"/></svg>
<span style="left:974.60px;top:329.00px;font-size:12px;font-family:'Liberation Sans', sans-serif;color:#2b2b2b;letter-spacing:-0.395px;">RTSMA_AST_ITEM</span>
<span style="left:1129.60px;top:329.00px;font-size:12px;font-family:'Liberation Sans', sans-serif;color:#2b2b2b;">Completed</span>
<div style="position:absolute;left:21.0px;top:351px;width:149.0px;height:1px;background:#ebebeb"></div>
<div style="position:absolute;left:171.0px;top:351px;width:142.0px;height:1px;background:#ebebeb"></div>
<div style="position:absolute;left:314.0px;top:351px;width:235.6px;height:1px;background:#ebebeb"></div>
<div style="position:absolute;left:550.6px;top:351px;width:109.9px;height:1px;background:#ebebeb"></div>
<div style="position:absolute;left:661.5px;top:351px;width:110.0px;height:1px;background:#ebebeb"></div>
<div style="position:absolute;left:772.5px;top:351px;width:66.5px;height:1px;background:#ebebeb"></div>
<div style="position:absolute;left:840.0px;top:351px;width:64.5px;height:1px;background:#ebebeb"></div>
<div style="position:absolute;left:905.5px;top:351px;width:56.0px;height:1px;background:#ebebeb"></div>
<div style="position:absolute;left:962.5px;top:351px;width:160.2px;height:1px;background:#ebebeb"></div>
<div style="position:absolute;left:1123.7px;top:351px;width:109.8px;height:1px;background:#ebebeb"></div>
<div style="position:absolute;left:1234.5px;top:351px;width:166.5px;height:1px;background:#ebebeb"></div>
<span style="left:26.00px;top:363.00px;font-size:12px;font-family:'Liberation Sans', sans-serif;color:#2b2b2b;letter-spacing:-0.106px;">ZCST-Vision Ops</span>
<span style="left:177.00px;top:363.00px;font-size:12px;font-family:'Liberation Sans', sans-serif;color:#2b2b2b;letter-spacing:-0.106px;">ZCST-Vision Ops</span>
<span style="left:320.60px;top:363.00px;font-size:12px;font-family:'Liberation Sans', sans-serif;color:#2b2b2b;letter-spacing:-0.202px;">MNT_RTS_MA3_WO_24031818146315</span>
<span style="left:557.30px;top:363.00px;font-size:12px;font-family:'Liberation Sans', sans-serif;color:#2b2b2b;">No</span>
<span style="left:668.50px;top:363.00px;font-size:12px;font-family:'Liberation Sans', sans-serif;color:#2b2b2b;">Yes</span>
<span style="left:787.50px;top:363.00px;font-size:12px;font-family:'Liberation Sans', sans-serif;color:#2b2b2b;letter-spacing:-0.074px;">1,755.00</span>
<span style="left:853.80px;top:363.00px;font-size:12px;font-family:'Liberation Sans', sans-serif;color:#2b2b2b;letter-spacing:-0.074px;">1,455.00</span>
<span style="left:920.50px;top:363.00px;font-size:12px;font-family:'Liberation Sans', sans-serif;color:#2b2b2b;letter-spacing:-0.041px;">300.00</span>
<svg style="position:absolute;left:967px;top:360px" width="12" height="12"><polygon points="1,0.6 10.2,0.6 1,9.8" fill="#f5a66c"/></svg>
<span style="left:974.60px;top:363.00px;font-size:12px;font-family:'Liberation Sans', sans-serif;color:#2b2b2b;letter-spacing:-0.395px;">RTSMA_AST_ITEM</span>
<span style="left:1129.60px;top:363.00px;font-size:12px;font-family:'Liberation Sans', sans-serif;color:#2b2b2b;">Completed</span>
<div style="position:absolute;left:21.0px;top:385px;width:149.0px;height:1px;background:#ebebeb"></div>
<div style="position:absolute;left:171.0px;top:385px;width:142.0px;height:1px;background:#ebebeb"></div>
<div style="position:absolute;left:314.0px;top:385px;width:235.6px;height:1px;background:#ebebeb"></div>
<div style="position:absolute;left:550.6px;top:385px;width:109.9px;height:1px;background:#ebebeb"></div>
<div style="position:absolute;left:661.5px;top:385px;width:110.0px;height:1px;background:#ebebeb"></div>
<div style="position:absolute;left:772.5px;top:385px;width:66.5px;height:1px;background:#ebebeb"></div>
<div style="position:absolute;left:840.0px;top:385px;width:64.5px;height:1px;background:#ebebeb"></div>
<div style="position:absolute;left:905.5px;top:385px;width:56.0px;height:1px;background:#ebebeb"></div>
<div style="position:absolute;left:962.5px;top:385px;width:160.2px;height:1px;background:#ebebeb"></div>
<div style="position:absolute;left:1123.7px;top:385px;width:109.8px;height:1px;background:#ebebeb"></div>
<div style="position:absolute;left:1234.5px;top:385px;width:166.5px;height:1px;background:#ebebeb"></div>
<span style="left:26.00px;top:396.00px;font-size:12px;font-family:'Liberation Sans', sans-serif;color:#2b2b2b;letter-spacing:-0.106px;">ZCST-Vision Ops</span>
<span style="left:177.00px;top:396.00px;font-size:12px;font-family:'Liberation Sans', sans-serif;color:#2b2b2b;letter-spacing:-0.106px;">ZCST-Vision Ops</span>
<span style="left:320.60px;top:396.00px;font-size:12px;font-family:'Liberation Sans', sans-serif;color:#2b2b2b;letter-spacing:-0.177px;">MNT_RTS_MA3_WO_240318143551453</span>
<span style="left:557.30px;top:396.00px;font-size:12px;font-family:'Liberation Sans', sans-serif;color:#2b2b2b;">No</span>
<span style="left:668.50px;top:396.00px;font-size:12px;font-family:'Liberation Sans', sans-serif;color:#2b2b2b;">Yes</span>
<span style="left:787.50px;top:396.00px;font-size:12px;font-family:'Liberation Sans', sans-serif;color:#2b2b2b;letter-spacing:-0.074px;">1,755.00</span>
<span style="left:853.80px;top:396.00px;font-size:12px;font-family:'Liberation Sans', sans-serif;color:#2b2b2b;letter-spacing:-0.074px;">1,455.00</span>
<span style="left:920.50px;top:396.00px;font-size:12px;font-family:'Liberation Sans', sans-serif;color:#2b2b2b;letter-spacing:-0.041px;">300.00</span>
<svg style="position:absolute;left:967px;top:394px" width="12" height="12"><polygon points="1,0.6 10.2,0.6 1,9.8" fill="#f5a66c"/></svg>
<span style="left:974.60px;top:396.00px;font-size:12px;font-family:'Liberation Sans', sans-serif;color:#2b2b2b;letter-spacing:-0.395px;">RTSMA_AST_ITEM</span>
<span style="left:1129.60px;top:396.00px;font-size:12px;font-family:'Liberation Sans', sans-serif;color:#2b2b2b;">Completed</span>
<div style="position:absolute;left:21.0px;top:418px;width:149.0px;height:1px;background:#ebebeb"></div>
<div style="position:absolute;left:171.0px;top:418px;width:142.0px;height:1px;background:#ebebeb"></div>
<div style="position:absolute;left:314.0px;top:418px;width:235.6px;height:1px;background:#ebebeb"></div>
<div style="position:absolute;left:550.6px;top:418px;width:109.9px;height:1px;background:#ebebeb"></div>
<div style="position:absolute;left:661.5px;top:418px;width:110.0px;height:1px;background:#ebebeb"></div>
<div style="position:absolute;left:772.5px;top:418px;width:66.5px;height:1px;background:#ebebeb"></div>
<div style="position:absolute;left:840.0px;top:418px;width:64.5px;height:1px;background:#ebebeb"></div>
<div style="position:absolute;left:905.5px;top:418px;width:56.0px;height:1px;background:#ebebeb"></div>
<div style="position:absolute;left:962.5px;top:418px;width:160.2px;height:1px;background:#ebebeb"></div>
<div style="position:absolute;left:1123.7px;top:418px;width:109.8px;height:1px;background:#ebebeb"></div>
<div style="position:absolute;left:1234.5px;top:418px;width:166.5px;height:1px;background:#ebebeb"></div>
<span style="left:26.00px;top:430.00px;font-size:12px;font-family:'Liberation Sans', sans-serif;color:#2b2b2b;letter-spacing:-0.106px;">ZCST-Vision Ops</span>
<span style="left:177.00px;top:430.00px;font-size:12px;font-family:'Liberation Sans', sans-serif;color:#2b2b2b;letter-spacing:-0.106px;">ZCST-Vision Ops</span>
<span style="left:320.60px;top:430.00px;font-size:12px;font-family:'Liberation Sans', sans-serif;color:#2b2b2b;letter-spacing:-0.177px;">MNT_RTS_MA3_WO_240318123629149</span>
<span style="left:557.30px;top:430.00px;font-size:12px;font-family:'Liberation Sans', sans-serif;color:#2b2b2b;">No</span>
<span style="left:668.50px;top:430.00px;font-size:12px;font-family:'Liberation Sans', sans-serif;color:#2b2b2b;">Yes</span>
<span style="left:787.50px;top:430.00px;font-size:12px;font-family:'Liberation Sans', sans-serif;color:#2b2b2b;letter-spacing:-0.074px;">1,755.00</span>
<span style="left:853.80px;top:430.00px;font-size:12px;font-family:'Liberation Sans', sans-serif;color:#2b2b2b;letter-spacing:-0.074px;">1,455.00</span>
<span style="left:920.50px;top:430.00px;font-size:12px;font-family:'Liberation Sans', sans-serif;color:#2b2b2b;letter-spacing:-0.041px;">300.00</span>
<svg style="position:absolute;left:967px;top:427px" width="12" height="12"><polygon points="1,0.6 10.2,0.6 1,9.8" fill="#f5a66c"/></svg>
<span style="left:974.60px;top:430.00px;font-size:12px;font-family:'Liberation Sans', sans-serif;color:#2b2b2b;letter-spacing:-0.395px;">RTSMA_AST_ITEM</span>
<span style="left:1129.60px;top:430.00px;font-size:12px;font-family:'Liberation Sans', sans-serif;color:#2b2b2b;">Completed</span>
<div style="position:absolute;left:21.0px;top:452px;width:149.0px;height:1px;background:#ebebeb"></div>
<div style="position:absolute;left:171.0px;top:452px;width:142.0px;height:1px;background:#ebebeb"></div>
<div style="position:absolute;left:314.0px;top:452px;width:235.6px;height:1px;background:#ebebeb"></div>
<div style="position:absolute;left:550.6px;top:452px;width:109.9px;height:1px;background:#ebebeb"></div>
<div style="position:absolute;left:661.5px;top:452px;width:110.0px;height:1px;background:#ebebeb"></div>
<div style="position:absolute;left:772.5px;top:452px;width:66.5px;height:1px;background:#ebebeb"></div>
<div style="position:absolute;left:840.0px;top:452px;width:64.5px;height:1px;background:#ebebeb"></div>
<div style="position:absolute;left:905.5px;top:452px;width:56.0px;height:1px;background:#ebebeb"></div>
<div style="position:absolute;left:962.5px;top:452px;width:160.2px;height:1px;background:#ebebeb"></div>
<div style="position:absolute;left:1123.7px;top:452px;width:109.8px;height:1px;background:#ebebeb"></div>
<div style="position:absolute;left:1234.5px;top:452px;width:166.5px;height:1px;background:#ebebeb"></div>
<span style="left:26.00px;top:464.00px;font-size:12px;font-family:'Liberation Sans', sans-serif;color:#2b2b2b;letter-spacing:-0.106px;">ZCST-Vision Ops</span>
<span style="left:177.00px;top:464.00px;font-size:12px;font-family:'Liberation Sans', sans-serif;color:#2b2b2b;letter-spacing:-0.106px;">ZCST-Vision Ops</span>
<span style="left:320.60px;top:464.00px;font-size:12px;font-family:'Liberation Sans', sans-serif;color:#2b2b2b;letter-spacing:-0.202px;">MNT_RTS_MA3_WO_24031815052253</span>
<span style="left:557.30px;top:464.00px;font-size:12px;font-family:'Liberation Sans', sans-serif;color:#2b2b2b;">No</span>
<span style="left:668.50px;top:464.00px;font-size:12px;font-family:'Liberation Sans', sans-serif;color:#2b2b2b;">Yes</span>
<span style="left:787.50px;top:464.00px;font-size:12px;font-family:'Liberation Sans', sans-serif;color:#2b2b2b;letter-spacing:-0.074px;">1,755.00</span>
<span style="left:853.80px;top:464.00px;font-size:12px;font-family:'Liberation Sans', sans-serif;color:#2b2b2b;letter-spacing:-0.074px;">1,455.00</span>
<span style="left:920.50px;top:464.00px;font-size:12px;font-family:'Liberation Sans', sans-serif;color:#2b2b2b;letter-spacing:-0.041px;">300.00</span>
<svg style="position:absolute;left:967px;top:461px" width="12" height="12"><polygon points="1,0.6 10.2,0.6 1,9.8" fill="#f5a66c"/></svg>
<span style="left:974.60px;top:464.00px;font-size:12px;font-family:'Liberation Sans', sans-serif;color:#2b2b2b;letter-spacing:-0.395px;">RTSMA_AST_ITEM</span>
<span style="left:1129.60px;top:464.00px;font-size:12px;font-family:'Liberation Sans', sans-serif;color:#2b2b2b;">Completed</span>
<div style="position:absolute;left:21.0px;top:486px;width:1380.0px;height:1px;background:#e6e6e6"></div>
<div style="position:absolute;left:21px;top:487px;width:1380px;height:15px;background:#f9f9f9"></div>
<div style="position:absolute;left:22px;top:491px;width:1354px;height:8px;border-radius:4px;background:#c1c1c1"></div>
<div style="position:absolute;left:21.0px;top:502px;width:1380.0px;height:1px;background:#d8e0e7"></div>
<div style="position:absolute;left:21px;top:503px;width:1380px;height:34px;background:#fefefe"></div>
<div style="position:absolute;left:21.0px;top:537px;width:1380.0px;height:1px;background:#d6dfe6"></div>
<span style="left:11.40px;top:563.00px;font-size:15.8px;font-family:'Liberation Sans', sans-serif;color:#2f2c2a;letter-spacing:-0.014px;">MNT_RTS_MA3_WO_240318144746410: Asset Details</span>
<span style="left:21.80px;top:599.00px;font-size:12px;font-family:'Liberation Sans', sans-serif;color:#1f1f1f;letter-spacing:-0.232px;">View</span>
<svg style="position:absolute;left:52px;top:601px" width="12" height="9"><polygon points="1.00,1.00 10.20,1.00 5.60,7.00" fill="#161616"/></svg>
<svg style="position:absolute;left:86px;top:594px" width="18" height="19" viewBox="0 0 18 19">
<g fill="#757c84">
<rect x="4" y="2" width="12.8" height="1.4"/>
<rect x="4" y="2" width="1" height="7.6"/>
<rect x="8.1" y="2" width="0.9" height="6.3"/>
<rect x="12.1" y="2" width="0.9" height="10.8"/>
<rect x="15.9" y="2" width="0.9" height="10.8"/>
<rect x="4" y="5.8" width="12.8" height="0.9"/>
<rect x="9.5" y="9.1" width="7.3" height="0.8"/>
<rect x="11.1" y="12.1" width="5.7" height="0.8"/>
<polygon points="6.9,9.4 4.1,12.7 9.8,12.7"/>
</g>
<path d="M7.07 12.5 V14.6 Q7.07 16.9 4.8 16.9 H2" fill="none" stroke="#757c84" stroke-width="1.9"/>
</svg>
<svg style="position:absolute;left:129px;top:596px" width="18" height="18" viewBox="0 0 18 18">
<g fill="#737a82">
<rect x="0.2" y="0.1" width="13.6" height="1.8"/>
<rect x="0.2" y="0.1" width="1" height="12.5"/>
<rect x="12.5" y="0.1" width="1.3" height="3.5"/>
<rect x="1" y="2.7" width="2.8" height="1"/>
<rect x="5.2" y="2.7" width="3.6" height="1"/>
<rect x="10.2" y="2.7" width="3.6" height="1"/>
<rect x="1" y="4.9" width="2.8" height="1"/>
<rect x="1" y="7" width="2.8" height="1"/>
<rect x="1" y="8.9" width="2.8" height="1"/>
<rect x="5.2" y="8.9" width="1.8" height="1"/>
<rect x="0.2" y="11.5" width="7.6" height="1.2"/>
<polygon points="6,6 16,6 11.8,10.8 11.8,14.8 10.1,14.8 10.1,10.8"/>
</g></svg>
<svg style="position:absolute;left:161px;top:596px" width="18" height="18" viewBox="0 0 18 18">
<g fill="none" stroke="#737a82" stroke-width="1">
<path d="M0.6 2.8 V0.6 H2.8 M4.2 0.6 H6.8 M8.2 0.6 H10.8 M12.2 0.6 H14.4 V2.8 M14.4 4.2 V6.8 M14.4 8.2 V10.8 M14.4 12.2 V14.4 H12.2 M10.8 14.4 H8.2 M6.8 14.4 H4.2 M2.8 14.4 H0.6 V12.2 M0.6 10.8 V8.2 M0.6 6.8 V4.2"/>
<path d="M9.2 5.9 L12 3.1" stroke-width="1"/>
</g>
<polygon points="10.2,1.9 13.4,1.9 13.4,5.1" fill="#737a82"/>
<rect x="2.3" y="7.2" width="6.7" height="5.6" rx="0.6" fill="#737a82"/>
<g fill="#fff"><rect x="3.1" y="8" width="1.3" height="1.2"/><rect x="5" y="8" width="1.3" height="1.2"/><rect x="6.9" y="8" width="1.3" height="1.2"/>
<rect x="3.1" y="9.9" width="1.3" height="2.1"/><rect x="5" y="9.9" width="1.3" height="2.1"/><rect x="6.9" y="9.9" width="1.3" height="2.1"/></g>
</svg>
<span style="left:182.00px;top:599.00px;font-size:12px;font-family:'Liberation Sans', sans-serif;font-weight:bold;color:#161616;letter-spacing:0.077px;">Detach</span>
<div style="position:absolute;left:11.0px;top:621px;width:1390.0px;height:1px;background:#dbe2e8"></div>
<span style="left:16.30px;top:649.00px;font-size:13px;font-family:'Liberation Sans', sans-serif;font-weight:bold;color:#0b0b0b;">Item</span>
<span style="left:127.00px;top:649.00px;font-size:13px;font-family:'Liberation Sans', sans-serif;font-weight:bold;color:#0b0b0b;">Asset</span>
<div style="position:absolute;left:127.0px;top:663px;width:34.7px;height:1px;background:repeating-linear-gradient(90deg,#8a8a8a 0 1px,transparent 1px 2px)"></div>
<svg style="position:absolute;left:272px;top:648px" width="38" height="14" viewBox="0 0 38 14">
<polygon points="3.3,10.3 15.9,10.3 9.5,3" fill="#5a7ecb" stroke="#0d0d0d" stroke-width="1.1" stroke-linejoin="round"/>
<polygon points="20.1,3.2 32.9,3.2 26.5,10.6" fill="#a0a5aa" stroke="#0d0d0d" stroke-width="1.1" stroke-linejoin="round"/>
</svg>
<span style="left:317.10px;top:649.00px;font-size:13px;font-family:'Liberation Sans', sans-serif;font-weight:bold;color:#0b0b0b;">Currency</span>
<span style="left:493.70px;top:632.00px;font-size:13px;font-family:'Liberation Sans', sans-serif;font-weight:bold;color:#0b0b0b;">Input Costs</span>
<div style="position:absolute;left:423.0px;top:655px;width:212.7px;height:1px;background:#dbe2e8"></div>
<span style="left:457.61px;top:666.00px;font-size:13px;font-family:'Liberation Sans', sans-serif;font-weight:bold;color:#0b0b0b;">Total</span>
<span style="left:509.46px;top:666.00px;font-size:13px;font-family:'Liberation Sans', sans-serif;font-weight:bold;color:#0b0b0b;">Material</span>
<span style="left:570.75px;top:666.00px;font-size:13px;font-family:'Liberation Sans', sans-serif;font-weight:bold;color:#0b0b0b;">Resource</span>
<div style="position:absolute;left:11.0px;top:688px;width:1390.0px;height:1px;background:#dbe2e8"></div>
<div style="position:absolute;left:11px;top:689px;width:1390px;height:32px;background:#e2effc"></div>
<span style="left:16.30px;top:699.00px;font-size:12px;font-family:'Liberation Sans', sans-serif;color:#2b2b2b;letter-spacing:-0.437px;">RTSMA_AST_IT…</span>
<span style="left:127.00px;top:699.00px;font-size:12px;font-family:'Liberation Sans', sans-serif;color:#2b2b2b;letter-spacing:-0.421px;">RTSMA_AST_01</span>
<span style="left:317.10px;top:699.00px;font-size:12px;font-family:'Liberation Sans', sans-serif;color:#2b2b2b;">USD</span>
<span style="left:451.20px;top:699.00px;font-size:12px;font-family:'Liberation Sans', sans-serif;color:#2b2b2b;letter-spacing:-0.041px;">585.00</span>
<span style="left:522.10px;top:699.00px;font-size:12px;font-family:'Liberation Sans', sans-serif;color:#2b2b2b;letter-spacing:-0.041px;">485.00</span>
<span style="left:593.50px;top:699.00px;font-size:12px;font-family:'Liberation Sans', sans-serif;color:#2b2b2b;letter-spacing:-0.041px;">100.00</span>
<span style="left:16.30px;top:731.00px;font-size:12px;font-family:'Liberation Sans', sans-serif;color:#2b2b2b;letter-spacing:-0.437px;">RTSMA_AST_IT…</span>
<span style="left:127.00px;top:731.00px;font-size:12px;font-family:'Liberation Sans', sans-serif;color:#2b2b2b;letter-spacing:-0.421px;">RTSMA_AST_02</span>
<span style="left:317.10px;top:731.00px;font-size:12px;font-family:'Liberation Sans', sans-serif;color:#2b2b2b;">USD</span>
<span style="left:451.20px;top:731.00px;font-size:12px;font-family:'Liberation Sans', sans-serif;color:#2b2b2b;letter-spacing:-0.041px;">585.00</span>
<span style="left:522.10px;top:731.00px;font-size:12px;font-family:'Liberation Sans', sans-serif;color:#2b2b2b;letter-spacing:-0.041px;">485.00</span>
<span style="left:593.50px;top:731.00px;font-size:12px;font-family:'Liberation Sans', sans-serif;color:#2b2b2b;letter-spacing:-0.041px;">100.00</span>
<div style="position:absolute;left:11.0px;top:753px;width:109.6px;height:1px;background:#ebebeb"></div>
<div style="position:absolute;left:121.6px;top:753px;width:188.6px;height:1px;background:#ebebeb"></div>
<div style="position:absolute;left:311.2px;top:753px;width:110.7px;height:1px;background:#ebebeb"></div>
<div style="position:absolute;left:422.9px;top:753px;width:69.5px;height:1px;background:#ebebeb"></div>
<div style="position:absolute;left:493.4px;top:753px;width:69.9px;height:1px;background:#ebebeb"></div>
<div style="position:absolute;left:564.3px;top:753px;width:70.4px;height:1px;background:#ebebeb"></div>
<div style="position:absolute;left:635.7px;top:753px;width:765.3px;height:1px;background:#ebebeb"></div>
<span style="left:16.30px;top:764.00px;font-size:12px;font-family:'Liberation Sans', sans-serif;color:#2b2b2b;letter-spacing:-0.437px;">RTSMA_AST_IT…</span>
<span style="left:127.00px;top:764.00px;font-size:12px;font-family:'Liberation Sans', sans-serif;color:#2b2b2b;letter-spacing:-0.421px;">RTSMA_AST_03</span>
<span style="left:317.10px;top:764.00px;font-size:12px;font-family:'Liberation Sans', sans-serif;color:#2b2b2b;">USD</span>
<span style="left:451.20px;top:764.00px;font-size:12px;font-family:'Liberation Sans', sans-serif;color:#2b2b2b;letter-spacing:-0.041px;">585.00</span>
<span style="left:522.10px;top:764.00px;font-size:12px;font-family:'Liberation Sans', sans-serif;color:#2b2b2b;letter-spacing:-0.041px;">485.00</span>
<span style="left:593.50px;top:764.00px;font-size:12px;font-family:'Liberation Sans', sans-serif;color:#2b2b2b;letter-spacing:-0.041px;">100.00</span>
<div style="position:absolute;left:11.0px;top:786px;width:1390.0px;height:1px;background:#d6dfe6"></div>
<svg style="position:absolute;left:0;top:0" width="1401" height="793"><g fill="none" stroke="#ff1e00">
<rect x="652.7" y="145.4" width="129.7" height="67.8" stroke-width="3.6"/>
<rect x="4.7" y="546.3" width="652.8" height="243.8" stroke-width="3.5"/>
</g></svg>
</div></body></html>
